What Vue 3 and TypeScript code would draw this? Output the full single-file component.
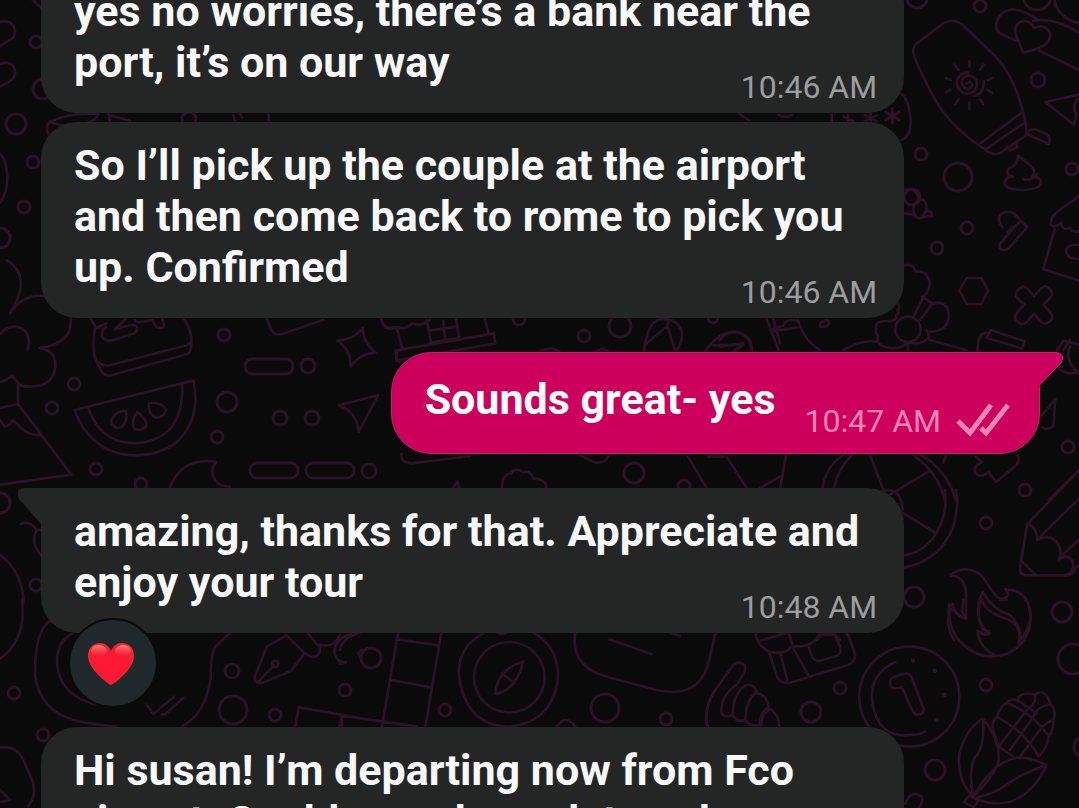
<script setup lang="ts">
interface Message {
  id: number
  text: string
  time: string
  own?: boolean
  tail?: boolean
  grouped?: boolean
  reaction?: boolean
}

const messages: Message[] = [
  { id: 1, text: 'yes no worries, there’s a bank near the port, it’s on our way', time: '10:46 AM' },
  {
    id: 2,
    text: 'So I’ll pick up the couple at the airport and then come back to rome to pick you up. Confirmed',
    time: '10:46 AM',
    grouped: true,
  },
  { id: 3, text: 'Sounds great- yes', time: '10:47 AM', own: true, tail: true },
  {
    id: 4,
    text: 'amazing, thanks for that. Appreciate and enjoy your tour',
    time: '10:48 AM',
    tail: true,
    reaction: true,
  },
  { id: 5, text: 'Hi susan! I’m departing now from Fco airport. Could you please let me know', time: '10:52 AM' },
]

interface Sketch {
  x: number
  y: number
  d: string
}

// Line drawings of the wallpaper, drawn at three times their size.
const sketches: Sketch[] = [
  {
    x: 0,
    y: 0,
    d: 'M0 66Q30 58 42 80Q52 105 32 118L0 138M0 192Q30 182 42 202Q52 228 32 242L0 260M0 462Q20 480 22 530Q22 580 0 608M98 0L125 24M150 415Q132 380 150 365Q220 335 295 342Q290 362 250 372M150 365L200 382M326 338L330 375M326 345L390 362M700 345L705 362M720 342L726 352M806 342V362',
  },
  {
    x: 720,
    y: 0,
    d: 'M590 130L670 70Q698 54 725 72L828 170Q875 225 895 290Q920 360 920 405L840 460Q815 468 790 445Q700 385 655 315Q600 220 580 160Q578 140 590 130ZM780 430L905 338M800 446L916 366M860 442L870 452L892 440L888 426M920 398Q935 382 955 392L978 402Q994 412 986 432L925 404M740 250Q750 240 756 252Q756 266 742 266Q722 262 726 240Q738 220 760 230Q776 245 768 266Q752 288 728 278Q706 262 712 238Q724 216 745 218M792 244Q790 284 762 288M748 184V200M790 194L780 210M818 234L804 240M816 278L802 270M790 312L780 298M748 326V310M706 312L716 298M678 276L692 270M678 234L692 240M704 194L716 210M888 122L836 98Q820 78 838 48Q860 24 890 30Q920 36 948 56M910 158L888 106Q880 80 900 66Q925 54 942 84Q970 70 988 94Q998 118 970 138Q940 152 910 158ZM940 62Q1000 50 1077 98M958 152L1077 210M1077 284L975 306L1062 374L1070 342Q1052 322 1077 294M545 282Q566 300 570 345Q580 405 545 420M335 342V366M58 342L88 362M175 345Q195 355 215 345M517 326V370M497 336L537 360M497 360L537 336M452 340V368M434 346L470 364M434 364L470 346M384 346V366M370 350L402 364M893 466L932 498Q950 512 936 530Q965 530 962 552Q954 570 900 570Q852 568 854 546Q858 530 878 530Q852 522 866 506Q896 494 893 466ZM910 538Q945 542 950 522',
  },
  {
    x: 720,
    y: 180,
    d: 'M555 30Q590 20 596 58Q622 55 620 90Q640 98 636 108L606 112Q596 120 580 104L555 100M596 58Q570 85 586 106M620 90L606 112M848 142Q830 120 842 104Q860 88 884 102L922 142L864 206Q848 216 840 204Q836 194 844 186L902 122M862 156L878 140M1077 48L1030 82Q990 106 992 134Q1006 146 1022 128Q1028 154 1050 144Q1058 160 1077 154M1004 148L970 268L1077 302M1077 195Q1040 190 1038 216Q1042 238 1077 236M740 294H784L804 332L784 372H740L718 332ZM904 322Q914 316 922 326L942 348L962 326Q976 312 990 328Q1002 342 990 354L970 374L990 396Q1004 410 990 424Q974 438 962 424L942 402L922 424Q908 440 892 424Q878 410 892 396L914 374L890 352Q882 336 904 322ZM555 256Q580 250 586 274Q618 270 628 302Q632 330 610 350L580 412M606 350L638 370L600 420M638 372Q672 360 684 390Q694 425 668 446Q640 460 620 452M532 370Q544 380 532 390Q544 396 528 406Q534 416 512 424Q480 420 470 432Q462 456 474 470Q466 496 502 502Q540 512 564 486Q600 500 628 472L620 452M564 486V510M526 448A38 38 0 0 0 602 448A38 38 0 0 0 526 448M628 480L740 510M140 416L176 510M158 454L232 442M188 438Q200 414 234 422M234 420Q250 480 300 510M300 430Q324 410 328 430Q316 446 300 438ZM370 510Q430 476 474 486M0 500L70 490L40 520M0 480Q20 450 60 458Q96 470 96 512M772 512L776 480Q780 458 806 458M812 450L914 484L906 506L800 474ZM1010 512L1030 482L1077 494',
  },
  {
    x: 0,
    y: 260,
    d: 'M20 0Q100 50 30 160Q70 100 135 108M212 174Q220 250 118 264Q168 270 166 320Q160 372 110 378Q76 384 56 372L36 346Q20 362 0 366M0 222Q30 188 66 206Q96 226 82 272M54 372V432L214 644L0 674M0 444L54 432M54 432L124 524M124 526Q80 526 56 496L38 480Q28 500 14 500L0 480M272 176L286 200Q276 250 284 290L304 334Q314 352 340 344L562 282Q576 276 574 240Q574 210 552 176M284 290Q294 320 330 316L560 256Q576 250 574 232M290 204L318 190M318 200Q302 214 306 230Q318 246 340 240L404 220Q414 212 410 200Q400 190 380 198L344 208L378 176M405 180Q410 190 424 186L456 180L466 196Q474 208 490 202Q494 190 486 176M224 450L580 362Q606 480 524 552Q430 610 326 570Q250 530 224 450ZM264 442Q290 520 354 542Q440 566 506 512Q552 460 546 372M378 452Q334 456 334 490Q352 516 372 494Q382 480 378 452ZM412 456Q390 490 404 506Q424 516 440 498Q442 480 412 456ZM446 430Q444 460 466 472Q490 474 498 452Q490 424 446 430ZM510 682Q546 590 648 606Q626 636 648 664Q664 680 690 680M800 176L814 210Q824 228 846 222L970 180M1088 204Q1090 250 1126 278Q1080 280 1052 320Q1054 270 1012 242Q1062 240 1088 204ZM1016 436L1134 406L1076 516Q1070 454 1016 436ZM1144 176Q1148 210 1174 206L1200 202M1200 270L1190 276V300L1200 306',
  },
  {
    x: 380,
    y: 310,
    d: 'M4 26Q10 60 46 52Q80 60 96 40Q130 50 150 30M50 54L66 112M140 30L154 100M228 26L238 88M146 62L232 50M152 98L236 84M190 34L196 96M46 122L342 70L346 100L50 152ZM314 26L326 72M64 432Q60 456 94 460L270 438M366 534Q366 490 394 490Q404 470 428 486Q452 480 460 506Q500 506 498 534M216 540L232 514L240 540M600 436L646 458Q678 460 686 436M924 440L980 534M1040 440L1100 534M1140 534L1200 500M986 440H1030M792 124Q800 40 840 28Q890 24 904 60Q912 90 888 124M800 100L862 48L884 118M862 48L866 28M976 124Q1010 70 1062 64Q1112 74 1114 120M1000 106L1090 104L1060 124M1180 26L1200 100M1170 60L1200 50M480 124Q510 108 540 124M650 124L666 116L684 124',
  },
  {
    x: 780,
    y: 340,
    d: 'M18 345L0 450M128 445Q136 380 190 345M162 445Q172 386 216 345M270 345L312 455M320 470L450 392M424 345Q500 390 528 480M400 345Q476 400 494 480M300 480Q300 452 326 450Q352 452 362 480M498 345L490 368M588 350L606 366Q576 380 588 402Q606 414 626 396L648 426L706 378Q724 364 712 345M786 226L826 176L820 258Q806 272 786 262M806 480L897 390M870 20Q850 60 897 100M836 84Q860 108 897 96M870 0L850 30',
  },
  {
    x: 800,
    y: 440,
    d: 'M315 382Q420 360 460 260Q478 200 468 150M315 346Q400 330 430 230Q440 200 434 150M304 216L402 276M250 150Q304 146 308 208M837 92L682 252L662 370Q654 406 680 406H800Q820 404 826 384L837 376M837 176L718 292M837 300L780 350M682 252Q712 262 712 300Q744 278 770 306Q790 336 776 358Q800 340 816 360Q828 390 800 404M664 362L706 404M452 404Q500 370 546 408L580 458Q596 484 618 474Q630 460 616 448Q690 450 692 530Q684 580 660 600M452 406Q500 410 498 470V536Q466 530 458 492Q430 550 462 600M548 456Q580 510 628 524Q668 560 658 600M548 456Q520 510 548 566Q570 582 566 572Q560 590 532 572L540 600M50 600L70 580H100L120 600M140 580L150 600',
  },
  {
    x: 0,
    y: 600,
    d: 'M0 176Q80 120 66 0M152 60Q100 100 106 230Q120 330 220 360Q290 376 350 380M220 98Q160 130 174 210Q190 290 290 314M690 98L644 142Q632 170 632 230Q620 340 545 380M440 314L460 342L522 290M484 344L496 342L550 294M0 442Q50 436 70 480L98 544Q110 590 84 618M0 570L30 600L0 606M860 106L800 140L764 232Q764 254 788 248L874 212L914 160L860 106ZM776 244L822 196M924 100L950 132Q970 150 950 168Q934 176 916 160M950 132Q1000 150 1020 104M1066 100Q1000 110 1004 160Q1012 190 1038 188M1080 168Q1070 160 1084 150M886 380L896 322L1080 354M1018 380L1026 348M816 192A10 10 0 0 0 836 192A10 10 0 0 0 816 192',
  },
  {
    x: 340,
    y: 600,
    d: 'M0 150Q10 110 60 98M0 192L16 186M174 98L126 380M304 98L256 380M174 118L294 136M154 240L272 262M0 346L230 380M6 350V380M432 98Q340 150 360 250Q390 380 508 380Q628 370 652 250Q666 150 580 98M402 232A106 106 0 0 0 614 232A106 106 0 0 0 402 232M550 184Q530 270 466 282Q470 210 550 184ZM486 220L524 250M470 98Q486 104 500 98M706 98Q690 200 800 230L950 270Q1080 300 1108 180L1126 98M808 118L934 162M990 98L1020 108M1140 250Q1090 310 1102 380M650 380Q676 340 706 380',
  },
  {
    x: 700,
    y: 600,
    d: 'M22 380Q10 320 46 270L96 200Q114 178 134 196Q142 210 112 252Q60 290 64 340Q80 356 98 344Q110 370 136 360Q150 382 180 374M136 256Q100 280 98 344M172 274Q136 300 136 360M136 256Q164 250 172 280Q200 284 206 320Q178 340 180 374M206 322Q238 344 238 380M184 376Q184 340 206 330M166 98Q170 136 206 154L232 232Q244 252 270 248L446 194Q470 180 464 160L442 98M176 124L256 100M206 156Q260 164 276 138Q340 146 360 98M276 138L326 228M240 156L262 240M266 98L278 138M326 140L336 170Q346 188 370 180L410 168Q426 160 420 140L404 104H372M478 290A150 150 0 0 0 778 290A150 150 0 0 0 478 290M586 186Q510 220 516 300Q530 420 640 404Q662 404 676 394M570 242Q576 228 620 220Q634 222 638 240L670 324Q674 344 650 344Q640 342 634 324L606 262Q580 270 572 258ZM748 14Q740 60 768 110Q830 190 920 162Q990 130 992 50Q988 10 976 0M790 0L786 34Q796 54 800 54Q770 52 754 16M844 0Q820 60 868 102Q850 108 834 94Q836 140 882 164M846 0Q860 40 920 56Q970 80 956 130M900 0H920M820 590Q770 540 778 460Q796 390 848 356Q900 420 896 480Q890 520 820 590ZM848 358Q858 440 820 480Q806 530 820 588M820 590Q880 480 960 472Q1000 474 1040 496Q1000 580 930 606Q880 616 836 600M1040 496Q960 520 900 568Q860 586 830 594M808 586L792 606L820 622L836 602ZM896 440L880 392Q872 370 890 350Q900 320 920 308Q934 296 952 300Q960 274 1004 284Q1040 264 1050 312Q1070 330 1060 360Q1062 390 1046 408Q1044 440 1016 470M920 308Q1000 340 1046 408M890 350Q980 400 1016 470M896 440L940 470M1004 284Q1012 310 980 330L896 440M1050 312Q1010 320 1000 350L930 450M1060 360Q1030 370 1020 390L960 470M952 300L1010 340M616 612Q630 570 664 588Q672 604 656 624M636 181A3 3 0 0 0 642 181A3 3 0 0 0 636 181M701 213A3 3 0 0 0 707 213A3 3 0 0 0 701 213M730 284A3 3 0 0 0 736 284A3 3 0 0 0 730 284M707 360A3 3 0 0 0 713 360A3 3 0 0 0 707 360',
  },
  {
    x: 0,
    y: 130,
    d: 'M62 1182Q90 1170 110 1200H125M110 1200Q90 1240 124 1276M0 1274Q60 1320 70 1400V1420',
  },
]

const dots: [number, number, number][] = [
  [36, 42, 6], [43, 89, 10], [16, 124, 10], [33, 162, 6], [24, 207, 6], [0, 238, 10], [189, 119, 7],
  [917, -2, 10], [980, 6, 6], [1038, 80, 7], [921, 154, 6], [958, 177, 14], [1072, 169, 6], [1037, -4, 14],
  [1082, -5, 28], [912, 197, 8], [967, 228, 6], [937, 248, 6], [224, 335, 6], [308, 366, 7], [74, 384, 6],
  [52, 408, 6], [227, 402, 10], [280, 418, 7], [312, 418, 7], [217, 437, 6], [96, 469, 6], [141, 484, 6],
  [369, 471, 7], [519, 319, 6], [584, 336, 6], [620, 326, 11], [713, 318, 5], [634, 473, 10], [684, 486, 6],
  [1068, 447, 6], [1025, 490, 6], [986, 523, 6], [914, 597, 10], [1062, 612, 10], [0, 503, 10], [36, 585, 6],
  [14, 693, 6], [43, 735, 6], [232, 671, 7], [233, 710, 14], [275, 715, 6], [345, 690, 6], [371, 658, 10],
  [445, 710, 6], [605, 708, 14], [666, 719, 6], [840, 688, 6], [811, 712, 10], [986, 685, 6], [1073, 659, 15],
  [935, 770, 10], [1084, 747, 10],
]

const pills: [number, number][] = [[245, 359], [250, 463], [306, 463]]
</script>

<template>
  <main class="chat">
    <svg class="wallpaper" viewBox="0 0 1079 808" preserveAspectRatio="xMinYMin slice" aria-hidden="true">
      <path
        v-for="(s, i) in sketches"
        :key="i"
        class="sketch"
        :d="s.d"
        :transform="`translate(${s.x} ${s.y}) scale(0.33333)`"
      />
      <circle v-for="([cx, cy, r], i) in dots" :key="i" :cx="cx" :cy="cy" :r="r" />
      <rect v-for="([x, y], i) in pills" :key="i" :x="x" :y="y" width="48" height="15" rx="7" />
    </svg>

    <ol class="messages">
      <li
        v-for="m in messages"
        :key="m.id"
        class="message"
        :class="{ own: m.own, tail: m.tail, grouped: m.grouped, reacted: m.reaction }"
      >
        <svg v-if="m.tail && m.own" class="tail-shape" viewBox="0 0 36 36" aria-hidden="true">
          <path class="fill" d="M0 0H28Q38 2 33 11L12 33V36H0Z" />
          <path class="edge" d="M0 .5H28Q38 2 33 11L11.500 33" />
        </svg>
        <svg v-else-if="m.tail" class="tail-shape" viewBox="0 0 36 36" aria-hidden="true">
          <path class="fill" d="M36 0H5Q-3 2 1 11L23 36H36Z" />
        </svg>
        <p class="text">{{ m.text }}</p>
        <div class="meta">
          <time>{{ m.time }}</time>
          <svg v-if="m.own" class="ticks" viewBox="0 0 56 36" role="img" aria-label="Delivered">
            <path d="M3 18L15 30L36 2M26 25L31 30L53 2" />
          </svg>
        </div>
        <button v-if="m.reaction" class="reaction" type="button" aria-label="Heart reaction">
          <svg viewBox="0 0 48 44" aria-hidden="true">
            <defs>
              <radialGradient id="heart" cx="0.5" cy="0.55" r="0.6">
                <stop offset="0" stop-color="#ff1838" />
                <stop offset="0.6" stop-color="#fa1834" />
                <stop offset="1" stop-color="#ee2a30" />
              </radialGradient>
              <linearGradient id="shine" x1="0" y1="0" x2="0" y2="1">
                <stop offset="0" stop-color="#ff9a98" stop-opacity="0.8" />
                <stop offset="1" stop-color="#ff4a55" stop-opacity="0" />
              </linearGradient>
            </defs>
            <path
              fill="url(#heart)"
              d="M24 43C21 42 1 27 1 14C1 6 6 1 13 1C18 1 22 4 24 9C26 4 30 1 35 1C42 1 47 6 47 14C47 27 27 42 24 43Z"
            />
            <ellipse cx="12" cy="9" rx="8" ry="6" fill="url(#shine)" />
            <ellipse cx="36" cy="9" rx="8" ry="6" fill="url(#shine)" />
          </svg>
        </button>
      </li>
    </ol>
  </main>
</template>

<style>
body {
  margin: 0;
  background: #0a0a0a;
}
</style>

<style scoped>
.chat {
  position: relative;
  height: 100vh;
  overflow: hidden;
  background: #0a0a0a;
  font-family: Roboto, "Liberation Sans", sans-serif;
}

.wallpaper {
  position: absolute;
  inset: 0;
  width: 100%;
  height: 100%;
  fill: none;
  stroke: #2d1124;
  stroke-width: 3;
  stroke-linecap: round;
  stroke-linejoin: round;
}

.sketch {
  stroke-width: 8;
}

.messages {
  position: relative;
  display: flex;
  flex-direction: column;
  align-items: flex-start;
  gap: 34px;
  margin: -32px 0 0;
  padding: 0 39px 0 41px;
  list-style: none;
}

.message {
  position: relative;
  box-sizing: border-box;
  display: grid;
  width: 86.4%;
  padding: 18px 27px 6px 33px;
  border-radius: 36px;
  background: #242626;
  color: #f8f8fb;
}

.grouped {
  margin-top: -25px;
}

.reacted {
  margin-bottom: 60px;
  border-top-left-radius: 0;
}

.text,
.meta {
  grid-area: 1 / 1;
}

.text {
  margin: 0 0 19px;
  font-size: 43px;
  font-weight: 700;
  line-height: 51px;
}

.meta {
  display: flex;
  align-items: center;
  align-self: end;
  justify-self: end;
  gap: 14px;
  color: #9c9d9d;
  font-size: 32px;
  line-height: 40px;
}

.own {
  display: flex;
  align-self: flex-end;
  gap: 29px;
  width: auto;
  padding: 21px 28px 12px 33px;
  border: 1px solid #b52a63;
  border-radius: 40px;
  border-top-right-radius: 0;
  background: #cc005c;
  color: #ffffff;
}

.own .text {
  margin-bottom: 16px;
}

.own .meta {
  color: #ff87b4;
}

.tail-shape {
  position: absolute;
  top: 0;
  left: -23px;
  width: 36px;
  height: 36px;
  fill: #242626;
}

.own .tail-shape {
  top: -1px;
  right: -25px;
  left: auto;
  fill: #cc005c;
}

.edge {
  fill: none;
  stroke: #b52a63;
}

.ticks {
  width: 56px;
  height: 36px;
  fill: none;
  stroke: #ff87b4;
  stroke-width: 5;
}

.reaction {
  position: absolute;
  bottom: -75px;
  left: 27px;
  display: grid;
  place-items: center;
  box-sizing: border-box;
  width: 90px;
  height: 90px;
  padding: 2px 4px 0 0;
  border: 2px solid #0a0a0a;
  border-radius: 50%;
  background: #1f282b;
}

.reaction svg {
  width: 48px;
  height: 44px;
}
</style>
